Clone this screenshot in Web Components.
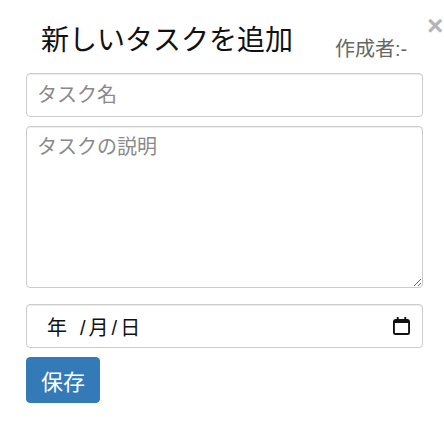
<!DOCTYPE html>
<html lang="ja">
<head>
<meta charset="utf-8">
<title>新しいタスクを追加</title>
<style>
  body { margin: 0; background: #fff; font-family: "Liberation Sans", "Noto Sans CJK JP", sans-serif; }
</style>
</head>
<body>
<task-modal></task-modal>
<script>
const FONT = '"Liberation Sans", "Noto Sans CJK JP", sans-serif';

class ModalHeader extends HTMLElement {
   constructor() {
      super();
      this.shadowDOM = this.attachShadow({ mode: 'open' });
   }

   connectedCallback() {
      this.shadowDOM.innerHTML = `
         <style>
            :host {
               display: flex;
               height: 73px;
               font-family: ${FONT};
            }
            h4 {
               margin: 21px 0 0 15px;
               height: 40px;
               font-size: 28px;
               line-height: 40px;
               font-weight: 400;
               color: #111;
               white-space: nowrap;
            }
            .author {
               margin: 35px 0 0 42px;
               font-size: 20px;
               line-height: 28px;
               color: #666;
               white-space: nowrap;
            }
            .close {
               margin: 9px 0 0 auto;
               width: 15px;
               height: 34px;
               font-size: 28px;
               line-height: 34px;
               font-weight: 700;
               color: #b4b4b4;
               text-align: left;
            }
         </style>
         <h4><slot name="title"></slot></h4>
         <span class="author"><slot name="author"></slot></span>
         <span class="close">×</span>
      `;
   }
}

class TextField extends HTMLElement {
   constructor() {
      super();
      this.shadowDOM = this.attachShadow({ mode: 'open' });
   }

   connectedCallback() {
      const multi = this.hasAttribute('multiline');
      const ph = this.getAttribute('placeholder');
      this.shadowDOM.innerHTML = `
         <style>
            :host {
               display: block;
               margin-bottom: ${multi ? 16 : 9}px;
            }
            input, textarea {
               display: block;
               box-sizing: border-box;
               width: 100%;
               height: ${multi ? 162 : 44}px;
               padding: ${multi ? '6px 10px' : '0 10px'};
               margin: 0;
               border: 1px solid #ccc;
               border-radius: 4px;
               font-family: ${FONT};
               font-size: 20px;
               line-height: 28px;
               color: #555;
               background: #fff;
               box-shadow: inset 0 1px 1px rgba(0,0,0,.075);
               outline: none;
            }
            ::placeholder { color: #8a8a8a; opacity: 1; }
         </style>
         ${multi
            ? `<textarea placeholder="${ph}"></textarea>`
            : `<input type="text" placeholder="${ph}">`}
      `;
   }
}

class DateField extends HTMLElement {
   constructor() {
      super();
      this.shadowDOM = this.attachShadow({ mode: 'open' });
   }

   connectedCallback() {
      this.shadowDOM.innerHTML = `
         <style>
            :host {
               display: flex;
               align-items: center;
               justify-content: space-between;
               box-sizing: border-box;
               height: 44px;
               margin-bottom: 9px;
               padding: 0 12px 0 20px;
               border: 1px solid #ccc;
               border-radius: 4px;
               font-family: ${FONT};
               font-size: 20px;
               color: #111;
               box-shadow: inset 0 1px 1px rgba(0,0,0,.075);
            }
            .value { white-space: nowrap; }
            .value .year { margin-right: 13px; }
            .value .sep { margin: 0 3px; }
            svg { display: block; width: 17px; height: 18px; }
         </style>
         <div class="value"><span class="year">年</span><span>/</span><span class="sep">月</span><span>/</span><span class="sep">日</span></div>
         <svg viewBox="1 1 18 18" preserveAspectRatio="none" aria-hidden="true">
            <path fill="#111" d="M5 1h2v2h6V1h2v2h1.500A2.500 2.500 0 0 1 19 5.500v11a2.500 2.500 0 0 1-2.500 2.500h-13A2.500 2.500 0 0 1 1 16.500v-11A2.500 2.500 0 0 1 3.500 3H5V1zM3 7v9.500a.5.5 0 0 0 .5.5h13a.5.5 0 0 0 .5-.5V7H3z"/>
         </svg>
      `;
   }
}

class SaveButton extends HTMLElement {
   constructor() {
      super();
      this.shadowDOM = this.attachShadow({ mode: 'open' });
   }

   connectedCallback() {
      this.shadowDOM.innerHTML = `
         <style>
            :host { display: block; }
            button {
               display: block;
               width: 74px;
               height: 46px;
               padding: 0;
               border: 1px solid #337ab7;
               border-radius: 4px;
               background: #337ab7;
               color: #fff;
               font-family: ${FONT};
               font-size: 22px;
            }
         </style>
         <button type="button"><slot></slot></button>
      `;
   }
}

class TaskModal extends HTMLElement {
   constructor() {
      super();
      this.shadowDOM = this.attachShadow({ mode: 'open' });
   }

   connectedCallback() {
      this.shadowDOM.innerHTML = `
         <style>
            :host {
               display: block;
               box-sizing: border-box;
               width: 444px;
               height: 432px;
               padding: 0 21px 0 26px;
            }
            modal-header { margin-right: -19px; }
         </style>
         <modal-header>
            <span slot="title">新しいタスクを追加</span>
            <span slot="author">作成者:-</span>
         </modal-header>
         <text-field placeholder="タスク名"></text-field>
         <text-field multiline placeholder="タスクの説明"></text-field>
         <date-field></date-field>
         <save-button>保存</save-button>
      `;
   }
}

customElements.define('modal-header', ModalHeader);
customElements.define('text-field', TextField);
customElements.define('date-field', DateField);
customElements.define('save-button', SaveButton);
customElements.define('task-modal', TaskModal);
</script>
</body>
</html>
